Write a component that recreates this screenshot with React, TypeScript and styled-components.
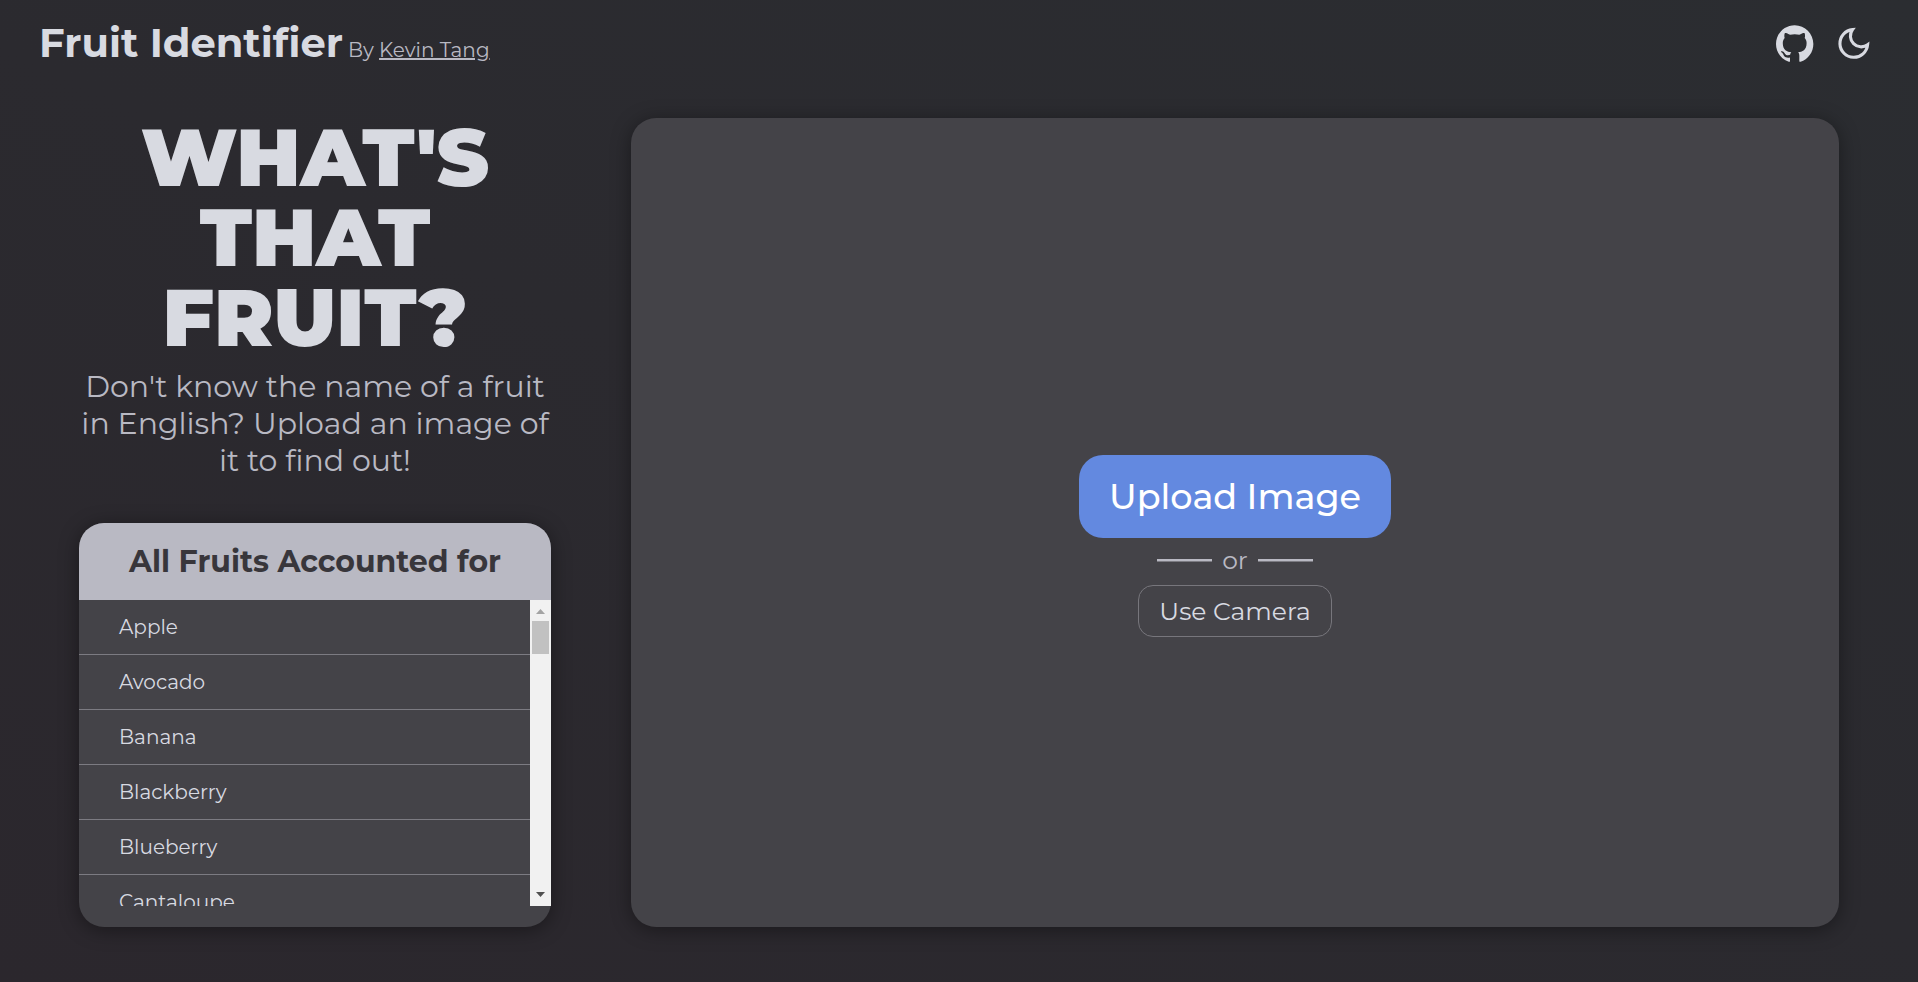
import React from "react";
import styled, { createGlobalStyle } from "styled-components";

const GlobalStyle = createGlobalStyle`
  * { box-sizing: border-box; }
  body {
    margin: 0;
    font-family: Montserrat, Inter, sans-serif;
    font-size: 20px;
    color: #d8dae1;
  }
`;

const Page = styled.div`
  height: 100vh;
  display: flex;
  flex-direction: column;
  overflow: hidden;
  background: linear-gradient(25deg, #2b272d, #2b2d31);
`;

const Header = styled.header`
  height: 86px;
  flex: none;
  display: flex;
  justify-content: space-between;
  align-items: center;
  padding: 0 46px 0 39px;
`;

const Brand = styled.div`
  display: flex;
  align-items: baseline;
  gap: 5px;
  white-space: nowrap;
`;

const Logo = styled.h1`
  margin: 0;
  font-size: 40px;
  line-height: 50px;
  font-weight: 700;
`;

const Byline = styled.span`
  font-size: 20px;
  color: #b9b9c3;
`;

const AuthorLink = styled.a`
  color: inherit;
  text-decoration: underline;
  text-decoration-thickness: 2px;
  text-underline-offset: 1px;
`;

const HeaderIcons = styled.nav`
  display: flex;
  align-items: center;
  gap: 21px;
`;

const Icon = styled.svg`
  width: 37.5px;
  height: 37px;
  display: block;
`;

const Content = styled.main`
  flex: 1;
  min-height: 0;
  display: flex;
  gap: 80px;
  padding: 32px 79px 55px;
`;

const Sidebar = styled.section`
  width: 472px;
  display: flex;
  flex-direction: column;
`;

const Headline = styled.h2`
  margin: 0;
  text-align: center;
  font-size: 80px;
  line-height: 80px;
  font-weight: 900;
`;

const Intro = styled.p`
  margin: 10px -20px 0;
  text-align: center;
  font-size: 30px;
  line-height: 37px;
  color: #b9b9c3;
`;

const Line = styled.span`
  display: block;
  white-space: nowrap;
`;

const FruitCard = styled.div`
  margin-top: 44px;
  height: 404px;
  display: flex;
  flex-direction: column;
  padding-bottom: 21px;
  border-radius: 25px;
  background: #444348;
  box-shadow: 0 3px 20px rgba(0, 0, 0, 0.4);
`;

const FruitTitle = styled.h3`
  margin: 0;
  height: 77px;
  flex: none;
  border-radius: 25px 25px 0 0;
  background: #b9b9c3;
  color: #38363b;
  text-align: center;
  font-size: 30px;
  line-height: 77px;
  font-weight: 700;
`;

const FruitScroller = styled.div`
  flex: 1;
  min-height: 0;
  display: flex;
`;

const FruitList = styled.ul`
  flex: 1;
  margin: 0;
  padding: 0;
  list-style: none;
  overflow: hidden;
`;

const Fruit = styled.li`
  height: 55px;
  padding-left: 40px;
  border-bottom: 1px solid #7c7b82;
  font-size: 20px;
  line-height: 54px;
`;

const Scrollbar = styled.div`
  width: 21px;
  display: flex;
  flex-direction: column;
  align-items: center;
  background: #f1f1f1;
`;

const ScrollArrow = styled.svg`
  width: 21px;
  height: 21px;
  flex: none;
`;

const Thumb = styled.div`
  width: 17px;
  height: 33px;
  margin-bottom: auto;
  background: #c1c1c1;
`;

const DropPanel = styled.section`
  flex: 1;
  display: flex;
  flex-direction: column;
  align-items: center;
  justify-content: center;
  padding-top: 47px;
  border-radius: 25px;
  background: #444348;
  box-shadow: 0 3px 20px rgba(0, 0, 0, 0.4);
`;

const Button = styled.button`
  padding: 0;
  font-family: inherit;
  white-space: nowrap;
`;

const UploadButton = styled(Button)`
  width: 312px;
  height: 83px;
  border: 0;
  border-radius: 24px;
  background: #6389e0;
  color: #fff;
  font-size: 35px;
  font-weight: 500;
`;

const Divider = styled.div`
  height: 47px;
  padding-bottom: 4px;
  display: flex;
  align-items: center;
  justify-content: center;
  gap: 10px;
  color: #b9b9c3;
  font-size: 25px;
  line-height: 30px;
`;

const Rule = styled.span`
  width: 55px;
  height: 3px;
  margin-top: 2px;
  background: linear-gradient(#b9b9c3 67%, #7c7b82 67%);
`;

const CameraButton = styled(Button)`
  width: 194px;
  height: 52px;
  border: 1px solid #77767c;
  border-radius: 15px;
  background: transparent;
  color: #d8dae1;
  font-size: 25px;
`;

const fruits = ["Apple", "Avocado", "Banana", "Blackberry", "Blueberry", "Cantaloupe"];

const GithubMark = () => (
  <Icon viewBox="0 0 98 96" fill="currentColor">
    <path d="M48.854 0C21.839 0 0 22 0 49.217c0 21.756 13.993 40.172 33.405 46.69 2.427.49 3.316-1.059 3.316-2.362 0-1.141-.08-5.052-.08-9.127-13.59 2.934-16.42-5.867-16.42-5.867-2.184-5.704-5.42-7.17-5.42-7.17-4.448-3.015.324-3.015.324-3.015 4.934.326 7.523 5.052 7.523 5.052 4.367 7.496 11.404 5.378 14.235 4.074.404-3.178 1.699-5.378 3.074-6.6-10.839-1.141-22.243-5.378-22.243-24.283 0-5.378 1.94-9.778 5.014-13.2-.485-1.222-2.184-6.275.486-13.038 0 0 4.125-1.304 13.426 5.052a46.97 46.97 0 0 1 12.214-1.63c4.125 0 8.33.571 12.213 1.63 9.302-6.356 13.427-5.052 13.427-5.052 2.67 6.763.97 11.816.485 13.038 3.155 3.422 5.015 7.822 5.015 13.2 0 18.905-11.404 23.06-22.324 24.283 1.78 1.548 3.316 4.481 3.316 9.126 0 6.6-.08 11.897-.08 13.526 0 1.304.89 2.853 3.316 2.364 19.412-6.52 33.405-24.935 33.405-46.691C97.707 22 75.788 0 48.854 0z" />
  </Icon>
);

const MoonIcon = () => (
  <Icon viewBox="0 0 24 24" fill="none" stroke="currentColor" strokeWidth="2">
    <path d="M21 12.79A9 9 0 1 1 11.21 3 7 7 0 0 0 21 12.79z" />
  </Icon>
);

export default function App() {
  return (
    <>
      <GlobalStyle />
      <Page>
        <Header>
          <Brand>
            <Logo>Fruit Identifier</Logo>
            <Byline>
              By <AuthorLink>Kevin Tang</AuthorLink>
            </Byline>
          </Brand>
          <HeaderIcons>
            <GithubMark />
            <MoonIcon />
          </HeaderIcons>
        </Header>
        <Content>
          <Sidebar>
            <Headline>
              <Line>WHAT'S</Line>
              <Line>THAT</Line>
              <Line>FRUIT?</Line>
            </Headline>
            <Intro>
              <Line>Don't know the name of a fruit</Line>
              <Line>in English? Upload an image of</Line>
              <Line>it to find out!</Line>
            </Intro>
            <FruitCard>
              <FruitTitle>All Fruits Accounted for</FruitTitle>
              <FruitScroller>
                <FruitList>
                  {fruits.map((name) => (
                    <Fruit key={name}>{name}</Fruit>
                  ))}
                </FruitList>
                <Scrollbar>
                  <ScrollArrow viewBox="0 0 21 21">
                    <path d="M6 14h9l-4.5-5z" fill="#a3a3a3" />
                  </ScrollArrow>
                  <Thumb />
                  <ScrollArrow viewBox="0 0 21 21">
                    <path d="M6 7h9l-4.5 5z" fill="#505050" />
                  </ScrollArrow>
                </Scrollbar>
              </FruitScroller>
            </FruitCard>
          </Sidebar>
          <DropPanel>
            <UploadButton>Upload Image</UploadButton>
            <Divider>
              <Rule />
              or
              <Rule />
            </Divider>
            <CameraButton>Use Camera</CameraButton>
          </DropPanel>
        </Content>
      </Page>
    </>
  );
}
